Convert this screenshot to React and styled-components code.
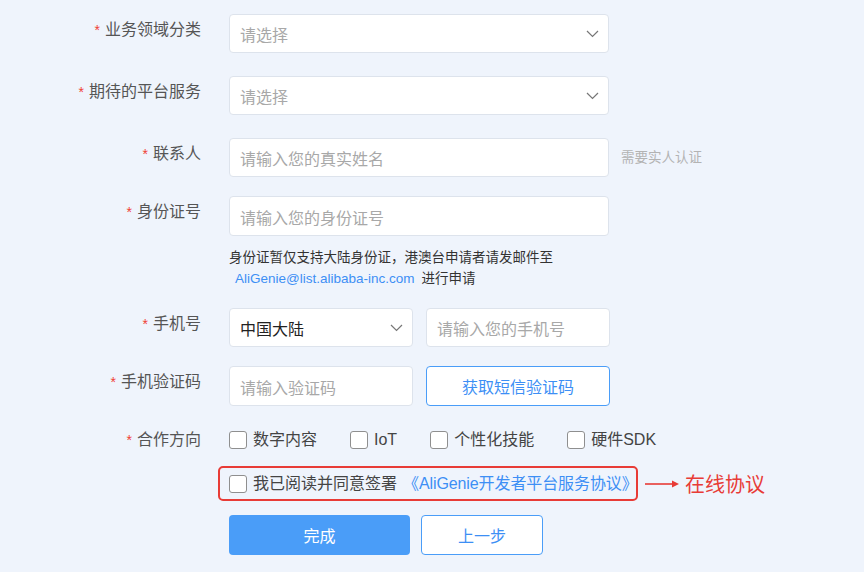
import React from 'react'
import styled, { createGlobalStyle } from 'styled-components'

const GlobalStyle = createGlobalStyle`
  html, body {
    margin: 0;
    padding: 0;
    background: #eff4fc;
  }
  body {
    font-family: "Liberation Sans", "Noto Sans CJK SC", sans-serif;
    color: #555;
  }
`

const Page = styled.div`
  width: 864px;
  height: 572px;
  overflow: hidden;
  padding-top: 14px;
  box-sizing: border-box;
`

const Row = styled.div`
  display: flex;
  align-items: ${p => (p.center ? 'center' : 'flex-start')};
  margin-bottom: ${p => p.mb || 0}px;
`

const Label = styled.div`
  width: 201px;
  flex: none;
  margin-right: 28px;
  text-align: right;
  font-size: 16px;
  line-height: 24px;
  padding-top: ${p => (p.flat ? 0 : 4)}px;
  color: #555;
  white-space: nowrap;
`

const Star = styled.span`
  color: #f04134;
  margin-right: 5px;
  font-size: 14px;
`

const Field = styled.div`
  display: flex;
  flex-direction: column;
`

const Inline = styled.div`
  display: flex;
  align-items: center;
  gap: ${p => p.gap || 0}px;
`

const Box = styled.div`
  width: ${p => p.w || 380}px;
  height: ${p => p.h || 39}px;
  box-sizing: border-box;
  background: #fff;
  border: 1px solid #dde3ec;
  border-radius: 4px;
  display: flex;
  align-items: center;
  justify-content: space-between;
  padding: 1px 9px 0 10px;
  font-size: 16px;
  color: ${p => (p.filled ? '#222' : '#a8a8a8')};
`

const Chevron = () => (
  <svg width="13" height="8" viewBox="0 0 13 8">
    <polyline points="1,1 6.5,6.5 12,1" fill="none" stroke="#777" strokeWidth="1.2" />
  </svg>
)

const Hint = styled.span`
  margin-left: 12px;
  font-size: 13.5px;
  color: #b3b3b3;
  line-height: 39px;
`

const Help = styled.div`
  margin-top: 11px;
  font-size: 13.5px;
  line-height: 21px;
  color: #333;
`

const HelpLink = styled.a`
  color: #3d8ff5;
  text-decoration: none;
  margin: 0 7px 0 6px;
`

const OutlineButton = styled.button`
  width: ${p => p.w}px;
  height: ${p => p.h || 39}px;
  box-sizing: border-box;
  background: #fff;
  border: 1px solid #4a9df8;
  border-radius: 4px;
  color: #3d8ff5;
  font-family: inherit;
  font-size: 16px;
  padding: 0;
`

const PrimaryButton = styled.button`
  width: 181px;
  height: 40px;
  background: #4a9df8;
  border: none;
  border-radius: 4px;
  color: #fff;
  font-family: inherit;
  font-size: 16px;
  padding: 0;
`

const Check = styled.label`
  display: inline-flex;
  align-items: center;
  gap: 6px;
  font-size: 16px;
  color: #444;
  line-height: 24px;
  white-space: nowrap;
`

const Square = styled.span`
  width: 18px;
  height: 18px;
  box-sizing: border-box;
  border: 1px solid #8f8f8f;
  border-radius: 3px;
  background: #fff;
  flex: none;
`

const Agreement = styled.div`
  margin-left: -11px;
  width: 420px;
  height: 35px;
  box-sizing: border-box;
  border: 2px solid #e83b36;
  border-radius: 5px;
  display: flex;
  align-items: center;
  padding-left: 9px;
  flex: none;
`

const AgreeLink = styled.span`
  color: #3d8ff5;
  letter-spacing: -0.1px;
`

const Note = styled.div`
  display: flex;
  align-items: center;
  margin-left: 7px;
  gap: 6px;
  color: #e83b36;
  font-size: 20px;
  white-space: nowrap;
`

const Arrow = () => (
  <svg width="34" height="10" viewBox="0 0 34 10">
    <line x1="0" y1="5" x2="28" y2="5" stroke="#e83b36" strokeWidth="1.6" />
    <polygon points="27,1.5 34,5 27,8.5" fill="#e83b36" />
  </svg>
)

const Req = ({ children, flat }) => (
  <Label flat={flat}>
    <Star>*</Star>
    {children}
  </Label>
)

export default function App() {
  return (
    <Page>
      <GlobalStyle />
      <Row mb={23}>
        <Req>业务领域分类</Req>
        <Box>请选择<Chevron /></Box>
      </Row>
      <Row mb={23}>
        <Req>期待的平台服务</Req>
        <Box>请选择<Chevron /></Box>
      </Row>
      <Row mb={19}>
        <Req>联系人</Req>
        <Inline>
          <Box>请输入您的真实姓名</Box>
          <Hint>需要实人认证</Hint>
        </Inline>
      </Row>
      <Row mb={19}>
        <Req>身份证号</Req>
        <Field>
          <Box h={40}>请输入您的身份证号</Box>
          <Help>
            身份证暂仅支持大陆身份证，港澳台申请者请发邮件至
            <br />
            <HelpLink>AliGenie@list.alibaba-inc.com</HelpLink>进行申请
          </Help>
        </Field>
      </Row>
      <Row mb={19}>
        <Req>手机号</Req>
        <Inline gap={13}>
          <Box w={184} filled>中国大陆<Chevron /></Box>
          <Box w={184}>请输入您的手机号</Box>
        </Inline>
      </Row>
      <Row mb={22}>
        <Req>手机验证码</Req>
        <Inline gap={13}>
          <Box w={184} h={40}>请输入验证码</Box>
          <OutlineButton w={184} h={40}>获取短信验证码</OutlineButton>
        </Inline>
      </Row>
      <Row mb={14} center>
        <Req flat>合作方向</Req>
        <Inline gap={33}>
          <Check><Square />数字内容</Check>
          <Check><Square />IoT</Check>
          <Check><Square />个性化技能</Check>
          <Check><Square />硬件SDK</Check>
        </Inline>
      </Row>
      <Row mb={14} center>
        <Label flat />
        <Agreement>
          <Check>
            <Square />
            我已阅读并同意签署
            <AgreeLink>《AliGenie开发者平台服务协议》</AgreeLink>
          </Check>
        </Agreement>
        <Note>
          <Arrow />
          在线协议
        </Note>
      </Row>
      <Row>
        <Label flat />
        <Inline gap={11}>
          <PrimaryButton>完成</PrimaryButton>
          <OutlineButton w={122} h={40}>上一步</OutlineButton>
        </Inline>
      </Row>
    </Page>
  )
}
